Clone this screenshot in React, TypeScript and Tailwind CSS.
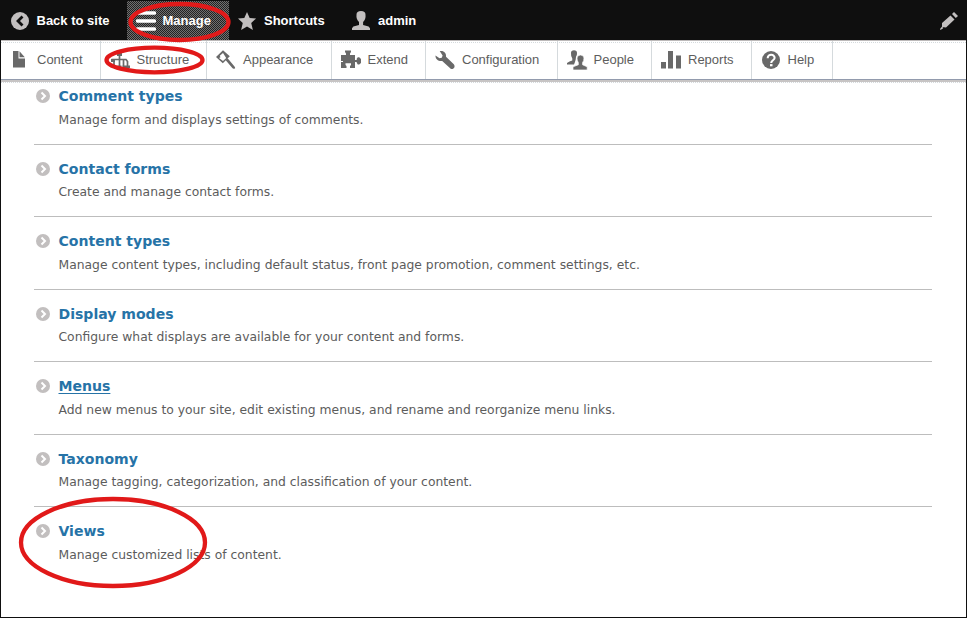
import React from "react";

type IconName = "content" | "structure" | "appearance" | "extend" | "config" | "people" | "reports" | "help";

const tabs: { label: string; icon: IconName; width: string }[] = [
  { label: "Content", icon: "content", width: "w-[100px] pl-[10px]" },
  { label: "Structure", icon: "structure", width: "w-[106px] pl-[9.5px]" },
  { label: "Appearance", icon: "appearance", width: "w-[125px] pl-[10px]" },
  { label: "Extend", icon: "extend", width: "w-[94px] pl-[9.5px]" },
  { label: "Configuration", icon: "config", width: "w-[132px] pl-[10px]" },
  { label: "People", icon: "people", width: "w-[94px] pl-[9.5px]" },
  { label: "Reports", icon: "reports", width: "w-[100px] pl-[10px]" },
  { label: "Help", icon: "help", width: "w-[81px] pl-[9.5px]" },
];

const rows = [
  { title: "Comment types", text: "Manage form and displays settings of comments." },
  { title: "Contact forms", text: "Create and manage contact forms." },
  { title: "Content types", text: "Manage content types, including default status, front page promotion, comment settings, etc." },
  { title: "Display modes", text: "Configure what displays are available for your content and forms." },
  { title: "Menus", text: "Add new menus to your site, edit existing menus, and rename and reorganize menu links.", underline: true },
  { title: "Taxonomy", text: "Manage tagging, categorization, and classification of your content." },
  { title: "Views", text: "Manage customized lists of content." },
];

function TabIcon({ name }: { name: IconName }) {
  return (
    <svg className="-ml-px mr-px h-5 w-5 shrink-0 overflow-visible" viewBox="0 0 20 20" fill="#696969">
      {name === "content" && <path d="M3 1h5.5v7.5H15V17.5H3zM9.5 1.3l5.3 6H9.5z" />}
      {name === "structure" && (
        <g>
          <path d="M1.5 9.5H16l1.5 2V16M9.5 4v13M4 10v5M13.5 10v6.5" fill="none" stroke="#696969" strokeWidth="1.7" />
          <path d="M7 2.5h5v3.5H7zM1 9h4v3H1zM7.5 15.5h4V19h-4zM12.5 15.5h7.5V18h-7.5z" />
        </g>
      )}
      {name === "appearance" && (
        <g>
          <path fillRule="evenodd" d="M7 .2l6.8 6-7 7L0 6.9zM7 3L3.8 5.7l.7 1.6L3 8l4 3 3.2-2.9z" />
          <path d="M9.5 10l2-1.8 1.6 1.7 5.4 6.5q1.5 2.1-.4 2.3-1.1.2-2-.9z" />
        </g>
      )}
      {name === "extend" && (
        <path d="M0 5h5V3.5L4 2V.5h6V2L9 3.5V5h5v5h1.7V8.8l1.1-1.5h1.4L20 9v4l-1.8 1.4h-1.4l-1.1-1.6V12H14v6H9v-2l1-1v-1.7H4.5v1.7l1 1v2H0v-6h2v-1H0z" />
      )}
      {name === "config" && (
        <path d="M.5 5.5l4 2.8 2.3-.6.8-2.3L4.7 1.1C8.7.2 11.5 2.8 11 6.8l7.8 7.5c1.5 1.7.7 4.4-1.4 4.7-1.1.1-2-.5-2.5-1.1L7.2 11C3.5 11.5.2 9.2.5 5.5z" />
      )}
      {name === "people" && (
        <g>
          <path d="M4 3Q4 .2 7 .2T10 3Q10.2 5.2 9 6.7L8.7 9.5 7.8 12.5 7 14.5H0V13l2.5-1.5 2.8-.9V8.5L4.2 6Z" />
          <path stroke="white" strokeWidth=".7" d="M10 8Q10.3 5 13.5 5T17 8Q17.1 10.8 15.6 12.5v2.3l4.6 2v3.2H6v-3.2l5.3-2v-2.3Q9.9 10.7 10 8Z" />
        </g>
      )}
      {name === "reports" && <path d="M0 12h5v6.5H0zM7 1h5v17.5H7zM15 5.5h5v13h-5z" />}
      {name === "help" && (
        <g>
          <circle cx="10" cy="10" r="9" />
          <path d="M6.7 8.2C6.7 3.3 14 4.1 13.6 8c-.2 2.4-3.4 2.2-3.4 5" fill="none" stroke="white" strokeWidth="2.1" />
          <path d="M9 14.1h2.5v2.2H9z" fill="white" />
        </g>
      )}
    </svg>
  );
}

function Bullet() {
  return (
    <svg className="mt-[7px] h-3.5 w-3.5 shrink-0" viewBox="0 0 14 14">
      <circle cx="7" cy="7" r="7" fill="#c2bfbf" />
      <path d="M5.5 3.5L9 7l-3.5 3.5" fill="none" stroke="white" strokeWidth="2" />
    </svg>
  );
}

export default function App() {
  return (
    <div className="relative h-[618px] w-[967px] overflow-hidden border border-t-0 border-[#0f0f0f] bg-white font-['Liberation_Sans',sans-serif] text-[13px]">
      <header className="flex h-10 items-center bg-[#0f0f0f] font-bold text-white">
        <a className="flex w-[126px] items-center pt-px pl-[10px]">
          <svg className="mr-2 h-[18px] w-[18px]" viewBox="0 0 18 18">
            <circle cx="9" cy="9" r="9" fill="#c2bfbf" />
            <path d="M11.5 4.5L7 9l4.5 4.5" fill="none" stroke="#0f0f0f" strokeWidth="2.8" />
          </svg>
          <span className="-ml-[0.5px]">Back to site</span>
        </a>
        <a className="mt-px flex h-[39px] w-[102px] items-center bg-[#0f0f0f] bg-[conic-gradient(#707070_25%,#222_0_50%,#707070_0_75%,#222_0)] bg-[length:2px_2px] pl-[9px]">
          <svg className="mr-[7px] h-5 w-5" viewBox="0 0 20 20">
            <path d="M1.5 2h17M1.5 10h17M1.5 18h17" stroke="white" strokeWidth="3.5" strokeLinecap="round" />
          </svg>
          <span className="-ml-[0.5px]">Manage</span>
        </a>
        <a className="flex w-[114px] items-center pt-px pl-[9px]">
          <svg className="mr-[8px] h-[18px] w-[18px]" viewBox="0 0 18 18" fill="#c2bfbf">
            <path d="M9 0l2.7 5.9 6.3.6-4.8 4.5 1.7 7L9 14.6 3.1 18l1.7-7L0 6.5l6.3-.6z" />
          </svg>
          Shortcuts
        </a>
        <a className="flex items-center pt-px pl-[9px]">
          <svg className="mr-[8px] h-[19px] w-[18px]" viewBox="0 0 18 19" fill="#c2bfbf">
            <path d="M4.5 3.5Q4.5 0 9 0t4.5 3.5q.5 4.5-2.4 7.5v3l5.5 1.5 1.4 1.7V19H0v-1.8l1.4-1.7L7 14v-3Q4 8 4.5 3.5Z" />
          </svg>
          <span className="pt-px">admin</span>
        </a>
        <svg className="ml-auto mr-[8px] mt-px h-[18px] w-[18px]" viewBox="0 0 18 18" fill="#c2bfbf">
          <path d="M2 11l8.5-7.5 4 4L6 15.5 2 15zM12 2l2-2 4 4-2.2 2zM2 14.5l1.2 1.7L.5 18 0 17z" />
        </svg>
      </header>
      <nav className="flex h-[39px] border-t border-[#bcb9b9] bg-[linear-gradient(90deg,#d5dadd_50%,#fff_50%)] bg-[length:2px_1px] bg-[position:0_1px] bg-repeat-x text-[#5d5d5d]">
        {tabs.map((tab) => (
          <a key={tab.label} className={`flex shrink-0 items-center gap-[6px] border-r border-[#d5dadd] ${tab.width}`}>
            <TabIcon name={tab.icon} />
            {tab.label}
          </a>
        ))}
      </nav>
      <div className="h-px bg-[#929bad]" />
      <div className="h-[2px] bg-[#c7c4c4]" />
      <div className="h-px bg-[linear-gradient(90deg,#d5dadd_50%,#fff_50%)] bg-[length:2px_1px]" />
      <main className="ml-[33px] w-[898px] font-['DejaVu_Sans',sans-serif]">
        {rows.map((row, i) => (
          <section key={row.title} className={`flex border-[#bdbdbd] pl-[2px] ${i === 0 ? "h-[62px] border-b" : i === 6 ? "h-[72px] pt-[10px]" : i % 2 ? "h-[72px] border-b pt-[10px]" : "h-[73px] border-b pt-[10px]"}`}>
            <div className={i === 0 ? "-mt-px" : ""}><Bullet /></div>
            <div className="ml-[8.5px] text-[12.35px] text-[#5c5c5c]">
              <h3 className={`text-[14.05px] leading-5 font-bold text-[#2673a7] ${i === 0 ? "mt-[3px]" : "mt-[4px]"} ${row.underline ? "underline underline-offset-2" : ""}`}>{row.title}</h3>
              <p className={`leading-5 whitespace-nowrap ${i % 2 ? "mt-[3px]" : "mt-[4px]"}`}>{row.text}</p>
            </div>
          </section>
        ))}
      </main>
      <svg className="pointer-events-none absolute top-0 -left-px h-[618px] w-[967px]" viewBox="0 0 967 618" fill="none" stroke="#e11919">
        <ellipse cx="179.5" cy="22" rx="49" ry="18" strokeWidth="4.3" />
        <ellipse cx="154.5" cy="60" rx="48" ry="12.3" strokeWidth="4.3" />
        <ellipse cx="113" cy="542.5" rx="92" ry="43.5" strokeWidth="4.3" />
      </svg>
    </div>
  );
}
